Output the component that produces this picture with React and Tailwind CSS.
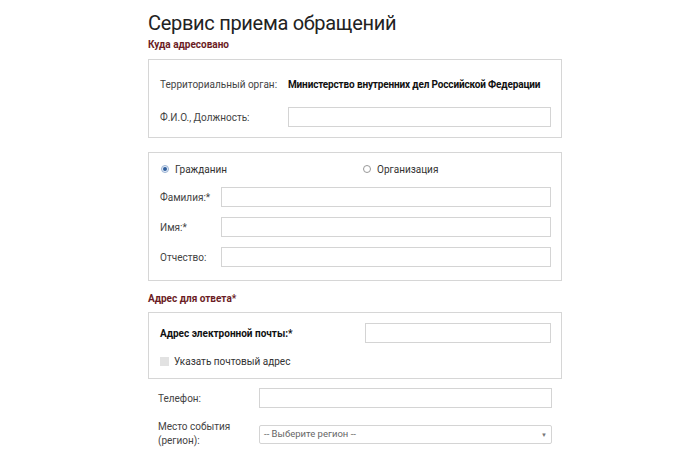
import React from "react";

const font = { fontFamily: 'Roboto, "Open Sans", sans-serif' };

function Input({ className = "" }) {
  return <div className={`h-[20px] border border-[#d4d4d4] bg-white ${className}`} />;
}

export default function App() {
  return (
    <div className="w-[700px] h-[466px] bg-white overflow-hidden text-[#333]" style={font}>
      <div className="ml-[148px] w-[414px]">
        <h1 className="pt-[9px] text-[20px] leading-[28px] tracking-[-0.3px] text-[#222]">Сервис приема обращений</h1>
        <div className="mt-[1px] text-[10px] leading-[14px] font-bold text-[#6b1c24]">Куда адресовано</div>

        <div className="mt-[7px] border border-[#d6d6d6] h-[79px] pl-[11px] pr-[10px] flex flex-col text-[10px]">
          <div className="flex items-center h-[20px] mt-[14px]">
            <div className="w-[128px] text-[#444] whitespace-nowrap">Территориальный орган:</div>
            <div className="font-bold text-[#111] whitespace-nowrap tracking-[-0.15px]">Министерство внутренних дел Российской Федерации</div>
          </div>
          <div className="flex items-center mt-[13px]">
            <div className="w-[128px] text-[#444] whitespace-nowrap">Ф.И.О., Должность:</div>
            <Input className="flex-1" />
          </div>
        </div>

        <div className="mt-[14px] border border-[#d6d6d6] h-[129px] pl-[11px] pr-[10px] text-[10px]">
          <div className="flex items-center h-[16px] mt-[8px]">
            <div className="w-[203px] flex items-center">
              <span className="ml-[1px] w-[8px] h-[8px] rounded-full border border-[#9bb3d3] bg-[#e8f0fb] flex items-center justify-center">
                <span className="w-[4px] h-[4px] rounded-full bg-[#2f5e9c]" />
              </span>
              <span className="ml-[6px] text-[#333]">Гражданин</span>
            </div>
            <div className="flex items-center">
              <span className="w-[8px] h-[8px] rounded-full border border-[#999] bg-white" />
              <span className="ml-[6px] text-[#333]">Организация</span>
            </div>
          </div>
          <div className="flex items-center mt-[10px]">
            <div className="w-[61px] text-[#444] whitespace-nowrap">Фамилия:*</div>
            <Input className="flex-1" />
          </div>
          <div className="flex items-center mt-[10px]">
            <div className="w-[61px] text-[#444]">Имя:*</div>
            <Input className="flex-1" />
          </div>
          <div className="flex items-center mt-[10px]">
            <div className="w-[61px] text-[#444]">Отчество:</div>
            <Input className="flex-1" />
          </div>
        </div>

        <div className="mt-[11px] text-[10px] leading-[14px] font-bold text-[#6b1c24]">Адрес для ответа*</div>

        <div className="mt-[6px] border border-[#d6d6d6] h-[67px] pl-[11px] pr-[10px] text-[10px]">
          <div className="flex items-center mt-[10px]">
            <div className="w-[205px] font-bold text-[#111]">Адрес электронной почты:*</div>
            <Input className="flex-1" />
          </div>
          <div className="flex items-center mt-[11px]">
            <span className="w-[9px] h-[9px] bg-[#e2e2e2]" />
            <span className="ml-[5px] text-[#333]">Указать почтовый адрес</span>
          </div>
        </div>

        <div className="pl-[10px] pr-[10px] text-[10px]">
          <div className="flex items-center mt-[9px]">
            <div className="w-[101px] text-[#444]">Телефон:</div>
            <Input className="flex-1" />
          </div>
          <div className="flex items-center mt-[12px]">
            <div className="w-[101px] text-[#444] leading-[14px]">
              Место события
              <br />
              (регион):
            </div>
            <div className="flex-1 h-[19px] border border-[#d4d4d4] rounded-[2px] flex items-center justify-between px-[4px]">
              <span className="text-[#666] text-[9.5px]">-- Выберите регион --</span>
              <span className="text-[#777] text-[6px]">▼</span>
            </div>
          </div>
        </div>
      </div>
    </div>
  );
}
